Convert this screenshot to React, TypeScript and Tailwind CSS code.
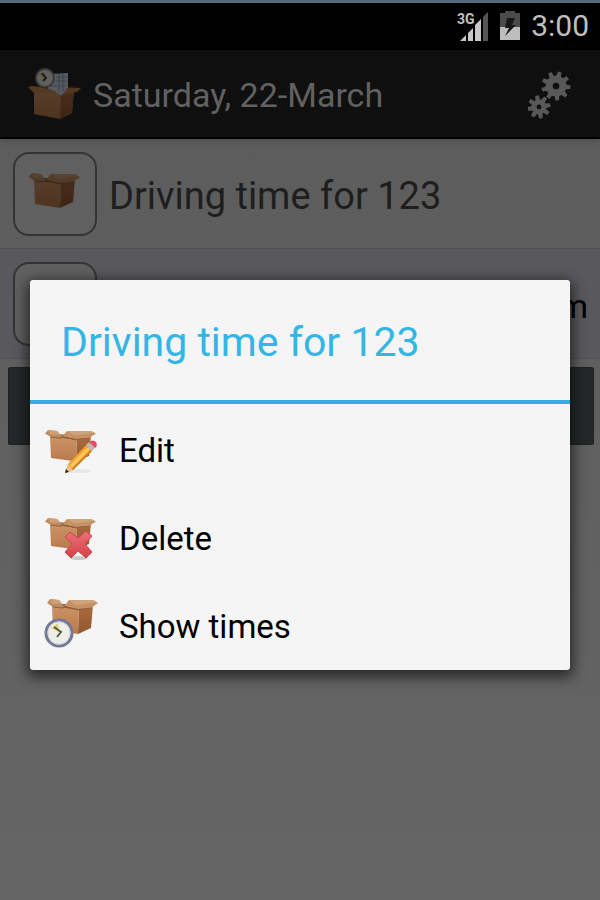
import React from 'react';

type BoxIconProps = {
  children?: React.ReactNode;
  dimmed?: boolean;
  shape?: 'plain' | 'low' | 'raised';
};

const shapeTransforms = {
  plain: 'translate(0 3)',
  low: 'translate(0 5) scale(1 0.9)',
  raised: 'translate(2 -2)',
};

const BoxShape: React.FC = () => (
  <g>
    <path d="M5 7 L32 9 L31 35 L6 31 Z" fill="url(#boxFront)" />
    <path d="M32 9 L46 6 L44 29 L31 35 Z" fill="url(#boxSide)" />
    <path d="M6 7 L15 5 L22 5 L45 6 L32 11 Z" fill="#8a5a35" />
    <path d="M3 0 L12 1 L17 7 L15 9 L6 8 L0 4 Z" fill="#bc8c62" />
    <path d="M3 0 L12 1 L15 5 L5 5 Z" fill="#cda078" />
    <path d="M22 1 L46 1 L51 4 L44 9 L31 10 L17 7 Z" fill="#c59265" />
    <path d="M22 1 L46 1 L49 3 L29 6 Z" fill="#d0a47b" />
    <path d="M6 8 L15 9 L19 8 L31 11 L44 9" fill="none" stroke="#8f6040" strokeWidth="1" />
  </g>
);

const BoxIcon: React.FC<BoxIconProps> = ({ children, dimmed, shape = 'plain' }) => (
  <svg
    viewBox="0 0 52 48"
    className={dimmed ? 'w-[52px] h-12 overflow-visible brightness-[0.42]' : 'w-[52px] h-12 overflow-visible'}
    aria-hidden="true"
  >
    <g transform={shapeTransforms[shape]}>
      <BoxShape />
    </g>
    {children}
  </svg>
);

const Clock: React.FC = () => (
  <g>
    <circle cx="14" cy="32" r="13" fill="#efefea" stroke="#777895" strokeWidth="3" />
    <circle cx="14" cy="32" r="11" fill="none" stroke="#d4d5df" strokeWidth="1" />
    <path d="M14 31 L6 27 L13 22 Z" fill="#e2cf6a" />
    <path d="M9 26 L16 31 L12 36" fill="none" stroke="#5b5a45" strokeWidth="2" />
  </g>
);

const Pencil: React.FC = () => (
  <g transform="translate(0 3)">
    <ellipse cx="33" cy="43" rx="13" ry="2" fill="#e6e6e6" />
    <path d="M23 36 L41 17 L47 23 L28 42 L20 45 Z" fill="#f0a02c" />
    <path d="M25 37 L43 19 L45 21 L27 40 Z" fill="#ffc65f" />
    <path d="M27 41 L46 22 L47 23 L28 42 Z" fill="#c87516" />
    <path d="M41 17 L44 14 L50 20 L47 23 Z" fill="#b9b9b3" />
    <path d="M44 14 Q48 11 51 14 Q53 18 50 20 Z" fill="#e34f60" />
    <path d="M23 36 L28 42 L20 45 Z" fill="#eac28c" />
    <path d="M21 41 L24 44 L20 45 Z" fill="#32251b" />
  </g>
);

const Cross: React.FC = () => (
  <g transform="translate(0 2)">
    <ellipse cx="34" cy="43" rx="9" ry="2" fill="#c9c9c9" />
    <path d="M25 17 L33 23 L41 16 L47 21 L40 29 L47 37 L41 43 L33 36 L26 43 L20 37 L27 29 L20 22 Z" fill="url(#crossFill)" stroke="#cf444b" strokeWidth="1" strokeLinejoin="round" />
  </g>
);

const Gradients: React.FC = () => (
  <svg className="absolute w-0 h-0" aria-hidden="true">
    <defs>
      <linearGradient id="boxFront" x1="0" y1="0" x2="0" y2="1">
        <stop offset="0" stopColor="#cb9466" />
        <stop offset="1" stopColor="#b87a4c" />
      </linearGradient>
      <linearGradient id="boxSide" x1="0" y1="0" x2="0" y2="1">
        <stop offset="0" stopColor="#aa6b3e" />
        <stop offset="1" stopColor="#94572f" />
      </linearGradient>
      <linearGradient id="crossFill" x1="0" y1="0" x2="0" y2="1">
        <stop offset="0" stopColor="#ea7477" />
        <stop offset="1" stopColor="#d63f48" />
      </linearGradient>
    </defs>
  </svg>
);

const AppLogo: React.FC = () => (
  <svg viewBox="0 1 54 52" className="w-[54px] h-[52px] overflow-visible brightness-[0.42]" aria-hidden="true">
    <path d="M3 19 L20 16 L51 19 L32 26 Z" fill="#6f3f1e" />
    <path d="M20 6 L40 5 L40 22 L33 28 L20 22 Z" fill="#ccd5e1" />
    <path d="M28 9 H39 M28 13 H39 M22 18 H38 M31 6 V24 M35 6 V23" stroke="#8b9db4" strokeWidth="1" />
    <path d="M6 22 L27 23 L33 29 L38 23 L46 22 L44 45 L32 51 L6 46 Z" fill="url(#boxFront)" />
    <path d="M33 29 L38 23 L46 22 L44 45 L32 51 Z" fill="url(#boxSide)" />
    <path d="M4 18 L22 21 L28 24 L25 26 L5 24 L0 19 Z" fill="#cb8b54" />
    <path d="M39 20 L53 20 L49 24 L38 26 L34 28 Z" fill="#c2834d" />
    <circle cx="17" cy="10" r="9" fill="#e4e4dc" stroke="#858592" strokeWidth="2" />
    <path d="M17 11 L11 6 L16 5 Z" fill="#d9be32" />
    <path d="M14 5 L18 10 L15 13" fill="none" stroke="#44443c" strokeWidth="2" />
  </svg>
);

const Gear: React.FC<{ x: number; y: number; r: number; teeth: number[] }> = ({ x, y, r, teeth }) => (
  <g transform={`translate(${x} ${y})`}>
    {teeth.map(angle => (
      <path key={angle} d={`M-2.4 ${-r + 1} L-1.8 ${-r - 4} H1.8 L2.4 ${-r + 1} Z`} transform={`rotate(${angle})`} fill="#585858" />
    ))}
    <circle r={r * 0.66} fill="none" stroke="#585858" strokeWidth={r * 0.68} />
  </g>
);

const GearsIcon: React.FC = () => (
  <svg viewBox="0 0 44 48" className="w-11 h-12" aria-hidden="true">
    <Gear x={28} y={15} r={10.5} teeth={[15, 55, 95, 135, 175, 215, 255, 295, 335]} />
    <Gear x={11} y={36} r={7.5} teeth={[35, 80, 125, 170, 215, 260, 305, 350]} />
  </svg>
);

const SignalIcon: React.FC = () => (
  <svg viewBox="0 0 32 32" className="w-8 h-8" aria-hidden="true">
    <path d="M3 31 L9 25 V31 Z M11 23 L16 18 V31 H11 Z M18 15 L24 9 V31 H18 Z" fill="#c8c8c8" />
    <path d="M26 7 L31 2 V31 H26 Z" fill="#555555" />
    <text x="0" y="14" fill="#c0c0c0" fontSize="14" fontWeight="700" fontFamily="Roboto, sans-serif">3G</text>
  </svg>
);

const BatteryIcon: React.FC = () => (
  <svg viewBox="0 0 20 30" className="w-5 h-[30px]" aria-hidden="true">
    <path d="M0 2 H5 V0 H15 V2 H20 V16 H0 Z" fill="#4b4b4b" />
    <path d="M0 16 H20 V29 H0 Z" fill="#bdbdbd" />
    <path d="M7 7 H15 L12 14 H16 L5 25 L9 17 H5 Z" fill="#181818" />
  </svg>
);

const menuItems = [
  { label: 'Edit', overlay: <Pencil />, shape: 'low' as const },
  { label: 'Delete', overlay: <Cross />, shape: 'low' as const },
  { label: 'Show times', overlay: <Clock />, shape: 'raised' as const },
];

const iconButton = 'w-[84px] h-[84px] shrink-0 rounded-2xl border-2 border-[#343434] bg-[#606060] flex items-center justify-center';

export default function App() {
  return (
    <div className="relative min-h-screen flex flex-col bg-linear-to-b from-[#5b5b5b] to-[#656565] font-['Roboto',sans-serif]">
      <Gradients />
      <div className="h-[50px] shrink-0 bg-black border-t-3 border-[#536b7b] flex items-center justify-end gap-[11px] pr-[11px] pb-0.5 text-[#bfbfbf]">
        <SignalIcon />
        <BatteryIcon />
        <span className="text-[30px] leading-8">3:00</span>
      </div>

      <header className="h-[89px] shrink-0 bg-[#0f0f0f] border-b-2 border-black flex items-center pt-0.5 pl-7 pr-7 shadow-md">
        <AppLogo />
        <h1 className="ml-[11px] flex-1 text-[34px] leading-10 text-[#616161]">Saturday, 22-March</h1>
        <button type="button" aria-label="Settings"><GearsIcon /></button>
      </header>

      <main>
        <ul>
          <li className="h-[110px] border-b border-[#505052] flex items-center pl-[13px] pr-3 gap-3">
            <button type="button" aria-label="Start driving time" className={iconButton}>
              <BoxIcon dimmed />
            </button>
            <span className="pt-1 text-[38px] leading-12 text-[#1e1e1e]">Driving time for 123</span>
          </li>
          <li className="h-[110px] bg-[#59595d] border-b border-[#505052] flex items-center justify-between pl-[13px] pr-3">
            <button type="button" aria-label="Start task" className={iconButton} />
            <span className="pt-1 text-[34px] leading-10 text-black">m</span>
          </li>
        </ul>
        <button type="button" aria-label="Add" className="block mx-2 mt-2 w-[calc(100%-14px)] h-[78px] rounded-xs bg-[#252829] border border-[#1f2121]" />
      </main>

      <div className="absolute inset-x-0 top-[50px] bottom-0 flex items-center px-[30px]">
        <div role="dialog" aria-labelledby="dialog-title" className="w-full rounded-[3px] bg-[#f5f5f5] shadow-[0_4px_14px_3px_rgba(0,0,0,0.6)]">
          <h2 id="dialog-title" className="px-[31px] pt-[38px] pb-[34px] text-[41px] leading-12 text-[#33b5e5] border-b-4 border-[#33addc]">Driving time for 123</h2>
          <div className="py-px">
            {menuItems.map(item => (
              <button key={item.label} type="button" className="w-full h-[88px] flex items-center gap-[22px] pl-[15px] text-left text-[33px] leading-10 text-black">
                <BoxIcon shape={item.shape}>{item.overlay}</BoxIcon>
                <span className="pt-1">{item.label}</span>
              </button>
            ))}
          </div>
        </div>
      </div>
    </div>
  );
}
